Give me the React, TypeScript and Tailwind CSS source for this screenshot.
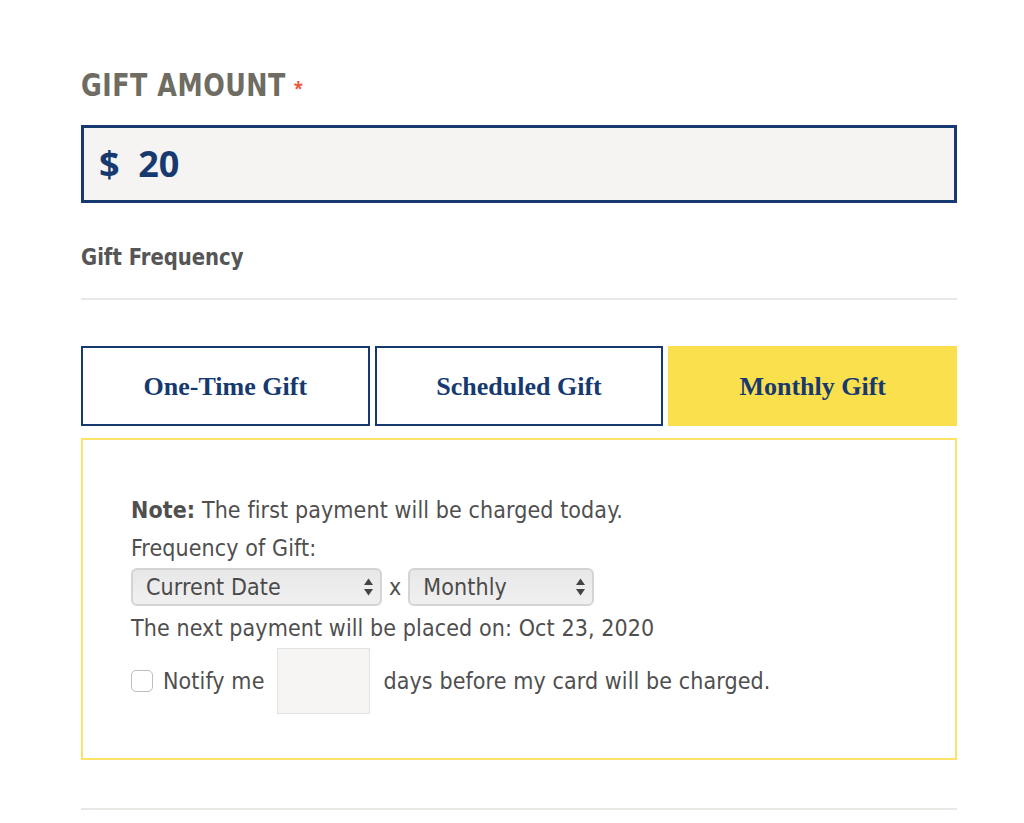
import React, { useState } from 'react';

const condensed = { fontFamily: '"DejaVu Sans Condensed", "DejaVu Sans", sans-serif' };

function SelectBox({ label, width }: { label: string; width: string }) {
  return (
    <div
      className={`relative flex h-[38px] ${width} items-center rounded-[6px] border-2 border-[#d4d4d4] bg-gradient-to-b from-[#e8e8e8] to-[#f0f0f0] pl-[13px] text-[23px] tracking-[0.1px] text-[#4a4a4a]`}
    >
      <span>{label}</span>
      <svg className="absolute right-[6px] top-1/2 -translate-y-1/2" width="11" height="20" viewBox="0 0 11 20">
        <path d="M5.5 1.5 L10 8 H1 Z" fill="#444" />
        <path d="M5.5 18.5 L10 12 H1 Z" fill="#444" />
      </svg>
    </div>
  );
}

export default function App() {
  const [tab, setTab] = useState<'one' | 'scheduled' | 'monthly'>('monthly');
  const tabs: { id: 'one' | 'scheduled' | 'monthly'; label: string }[] = [
    { id: 'one', label: 'One-Time Gift' },
    { id: 'scheduled', label: 'Scheduled Gift' },
    { id: 'monthly', label: 'Monthly Gift' },
  ];

  return (
    <div className="min-h-screen bg-white">
      <div className="ml-[81px] w-[876px] pt-[70px]">
        {/* Amount */}
        <div className="flex items-start">
          <h2
            className="origin-left scale-x-[0.88] text-[32px] font-bold uppercase leading-[30px] tracking-[0.6px] text-[#6f6c63]"
            style={condensed}
          >
            Gift Amount
          </h2>
          <span className="ml-[-20px] mt-[6px] text-[17px] font-bold text-[#e8593f]">*</span>
        </div>
        <div className="mt-[23px] flex h-[78px] items-center border-[3px] border-[#163a70] bg-[#f5f4f2] pl-[15px]">
          <span className="text-[36px] font-bold text-[#163a70]" style={{ fontFamily: '"Open Sans", sans-serif' }}>
            $&nbsp;&nbsp;20
          </span>
        </div>

        {/* Frequency */}
        <div className="mt-[37px] origin-left scale-x-[0.95] text-[23px] font-bold text-[#565656]" style={condensed}>
          Gift Frequency
        </div>
        <div className="mt-[24px] h-[2px] bg-[#e9e8e5]" />

        <div className="mt-[46px] flex gap-[5px]">
          {tabs.map((t) => (
            <button
              key={t.id}
              onClick={() => setTab(t.id)}
              className={`flex h-[80px] flex-1 basis-0 items-center justify-center text-[26px] font-bold text-[#163a70] ${
                tab === t.id ? 'border-2 border-[#fbe04e] bg-[#fbe04e]' : 'border-2 border-[#163a70] bg-white'
              }`}
              style={{ fontFamily: '"Liberation Serif", serif' }}
            >
              {t.label}
            </button>
          ))}
        </div>

        <div
          className="mt-[12px] h-[322px] border-2 border-[#fbe36a] pl-[48px] pt-[51px] text-[23px] tracking-[0.1px] text-[#4f4f4f]"
          style={condensed}
        >
          <div className="leading-[38px]">
            <span className="font-bold">Note:</span> The first payment will be charged today.
          </div>
          <div className="leading-[39px]">Frequency of Gift:</div>
          <div className="flex items-center">
            <SelectBox label="Current Date" width="w-[251px]" />
            <span className="mx-[7px]">x</span>
            <SelectBox label="Monthly" width="w-[186px]" />
          </div>
          <div className="mt-[2px] leading-[40px]">The next payment will be placed on: Oct 23, 2020</div>
          <div className="flex items-center">
            <input type="checkbox" className="h-[22px] w-[22px] appearance-none rounded-[5px] border border-[#bdbdbd] bg-white" />
            <span className="ml-[10px]">Notify me</span>
            <input className="mx-[13px] h-[66px] w-[93px] border border-[#e2e2e2] bg-[#f6f5f3]" />
            <span>days before my card will be charged.</span>
          </div>
        </div>

        <div className="mt-[48px] h-[2px] bg-[#e9e8e5]" />
      </div>
    </div>
  );
}
